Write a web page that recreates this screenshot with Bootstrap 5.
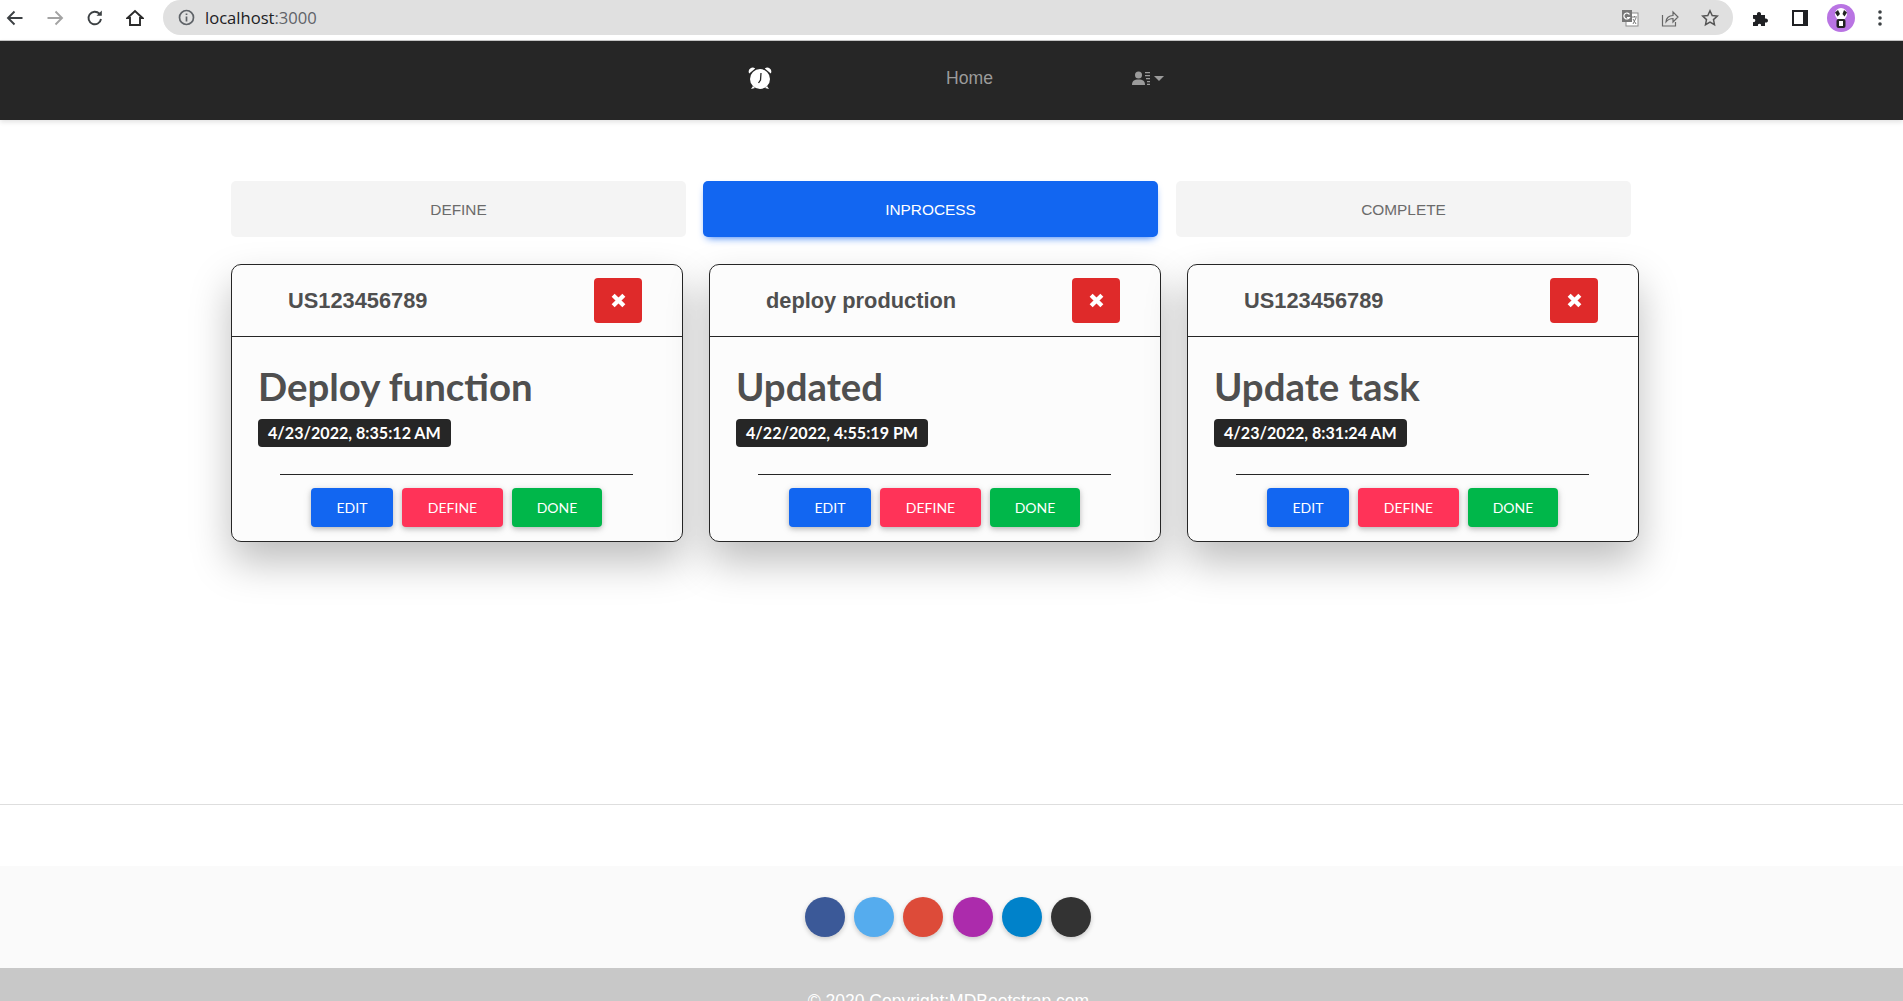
<!DOCTYPE html>
<html lang="en">
<head>
  <meta charset="UTF-8">
  <meta name="viewport" content="width=device-width, initial-scale=1.0">
  <title>Task board</title>
  <link href="https://cdn.jsdelivr.net/npm/bootstrap@5.3.3/dist/css/bootstrap.min.css" rel="stylesheet">
  <style>
    body { font-family: "Liberation Sans", sans-serif; background: #fff; }
    .page-clip { height: 1001px; }

    /* browser toolbar */
    .tool-bar { height: 41px; border-bottom: 1px solid #c8c8c8; padding: 0 0 5px 6px; }
    .tool-icon { width: 18px; height: 18px; flex: none; }
    .tool-back, .tool-forward, .tool-reload { margin-right: 22px; }
    .url-pill { width: 1570px; height: 35px; margin-left: 19px; background: #e0e0e0; border-radius: 18px; padding: 0 14px 0 15px; font: 16.6px "Open Sans", sans-serif; color: #202124; }
    .url-pill span { color: #5f6368; }
    .url-info { margin-right: 10px; }
    .pill-end { margin-left: auto; gap: 22px; }
    .ext-group { margin-left: 19px; }
    .ext-puzzle { margin-right: 21px; }
    .ext-panel { margin-right: 18px; }
    .avatar-dot { width: 28px; height: 28px; border-radius: 50%; background: #b974e3; flex: none; margin-right: 16px; }

    /* top nav */
    .top-nav { height: 79px; background: #262626; padding: 0; box-shadow: 0 2px 5px rgba(0,0,0,.12); }
    .top-nav .nav-link { color: #9b9b9b; font-size: 17.6px; padding: 0; margin-top: -4px; }
    .nav-clock { margin-left: 748px; margin-right: 174px; margin-top: -6px; }
    .top-nav .nav-user { margin-left: 139px; margin-top: -5px; display: flex; align-items: center; }

    /* status tabs */
    .board-wrap { padding: 61px 0 0 231px; }
    .tab-row { gap: 17px; }
    .tab-item { width: 455px; height: 56px; background: #f4f4f4; color: #6b6b6b; border: 0; border-radius: 5px; font-size: 15.400px; padding: 2px 0 0; }
    .tab-item.tab-on { background: #1266f1; color: #fff; box-shadow: 0 4px 9px -4px #1266f1; margin-right: 1px; }

    /* task cards */
    .card-row { gap: 26px; margin-top: 27px; }
    .task-card { width: 452px; height: 278px; background: #fcfcfc; border: 1px solid #262626; border-radius: 10px; box-shadow: 0 20px 40px rgba(0,0,0,.26); }
    .task-head { height: 72px; background: transparent; border-bottom: 1px solid #262626; padding: 0 40px 0 56px; color: #4f4f4f; font-size: 21.800px; font-weight: 700; }
    .task-head span { padding-top: 2px; }
    .close-btn { width: 48px; height: 45px; background: #df2a2a; color: #fff; border: 0; border-radius: 4px; padding: 0 0 2px; }
    .task-body { padding: 26px 27px 0 26px; }
    .task-title { font: 700 38.400px/1.2 Lato, sans-serif; color: #4f4f4f; margin: 0 0 10px; }
    .time-tag { background: #262626; color: #fff; font: 700 16.100px/20px Lato, sans-serif; padding: 4px 10px; border-radius: 4px; }
    .task-rule { width: 353px; margin: 27px 0 13px 22px; border: 0; border-top: 1px solid #262626; opacity: 1; }
    .task-actions { gap: 9px; }
    .act-btn { height: 39px; border: 0; border-radius: 4px; color: #fff; font: 400 14px Lato, sans-serif; padding: 0; box-shadow: 0 2px 5px rgba(0,0,0,.2), 0 2px 10px rgba(0,0,0,.1); }
    .act-edit { width: 82px; background: #1266f1; }
    .act-define { width: 101px; background: #ff3358; }
    .act-done { width: 90px; background: #00b74a; }
    .act-btn:hover { color: #fff; }

    /* footer */
    .rule-gap { margin-top: 262px; height: 62px; border-top: 1px solid #dedede; }
    .social-strip { height: 102px; background: #fafafa; gap: 9.300px; padding: 0 7px 1px 0; }
    .social-dot { width: 40px; height: 40px; border-radius: 50%; box-shadow: 0 2px 5px rgba(0,0,0,.2); }
    .copy-strip { background: #c8c8c8; color: #fff; font-size: 17.500px; text-align: center; padding: 20px 6px 0 0; height: 60px; }
  </style>
</head>
<body>
<div class="page-clip overflow-hidden">

  <div class="tool-bar d-flex align-items-center">
    <svg class="tool-icon tool-back" viewBox="0 0 18 18" fill="none" stroke="#3c4043" stroke-width="1.9"><path d="M16.5 9H2M8.5 2.5 2 9l6.5 6.5"/></svg>
    <svg class="tool-icon tool-forward" viewBox="0 0 18 18" fill="none" stroke="#a3a3a3" stroke-width="1.9"><path d="M1.5 9H16M9.5 2.5 16 9l-6.500 6.500"/></svg>
    <svg class="tool-icon tool-reload" viewBox="0 0 18 18" fill="none" stroke="#3c4043" stroke-width="1.9"><path d="M15 10a6.300 6.300 0 1 1-1.600-5.300"/><path d="M15.800 1.500v5.300h-5.300" fill="#3c4043" stroke="none"/></svg>
    <svg class="tool-icon" viewBox="0 0 18 18" fill="none" stroke="#2b2b2b" stroke-width="1.900"><path d="M1.500 9 9 2l7.500 7H14v7H4V9z"/></svg>
    <div class="url-pill d-flex align-items-center">
      <svg class="url-info" width="17" height="17" viewBox="0 0 17 17" fill="none" stroke="#5f6368" stroke-width="1.700"><circle cx="8.500" cy="8.500" r="7"/><path d="M8.500 7.500v5M8.500 4.500v1.500"/></svg>
      <div>localhost<span>:3000</span></div>
      <div class="pill-end d-flex align-items-center">
        <svg class="tool-icon" viewBox="0 0 18 18"><rect x="5" y="4" width="12" height="13" fill="#fff" stroke="#8b8b8b"/><rect x="1" y="1" width="10" height="12" fill="#777"/><path d="M8.500 5.500A3 3 0 1 0 8.500 8.500H6" fill="none" stroke="#fff" stroke-width="1.200"/><path d="M11 8h5M13.500 7v1M12 15l3-6M12 10l3 5" stroke="#777" fill="none"/></svg>
        <svg class="tool-icon" viewBox="0 0 18 18" fill="none" stroke="#666" stroke-width="1.200"><path d="M1.500 6v11h13v-4"/><path d="M5 13c0-4 3-6.500 7-6.500V3l5 5-5 5V9.500c-3 0-5 1-7 3.500z"/></svg>
        <svg class="tool-icon" viewBox="0 0 18 18" fill="none" stroke="#555" stroke-width="1.500"><path d="m9 1.800 2.200 4.700 5.100.6-3.800 3.500 1 5.100L9 13.200l-4.500 2.500 1-5.100-3.800-3.500 5.100-.6z"/></svg>
      </div>
    </div>
    <div class="ext-group d-flex align-items-center">
      <svg class="tool-icon ext-puzzle" viewBox="0 0 18 18" fill="#202124"><path d="M1 6h4c-1-4 5-4 4 0h4v3.500c4-1 4 5 0 4V17H9c1-3-4-3-3 0H1v-4c3 1 3-4 0-3z"/></svg>
      <svg class="tool-icon ext-panel" viewBox="0 0 18 18"><rect x="1" y="1" width="16" height="16" fill="#202124"/><rect x="3" y="3" width="9" height="12" fill="#fff"/></svg>
      <div class="avatar-dot d-flex align-items-center justify-content-center">
        <svg width="16" height="20" viewBox="0 0 16 20"><circle cx="8" cy="6" r="6" fill="#fff"/><path d="M2 4.500 5 2 7 6 4.500 8.500zM14 4.500 11 2 9.500 6l2 2.500z" fill="#222"/><rect x="3.500" y="11" width="9" height="9" rx="2" fill="#222"/><rect x="6" y="13" width="4" height="5" fill="#fff"/></svg>
      </div>
      <svg class="tool-icon" viewBox="0 0 18 18" fill="#3c4043"><circle cx="9" cy="3" r="1.800"/><circle cx="9" cy="9" r="1.800"/><circle cx="9" cy="15" r="1.800"/></svg>
    </div>
  </div>

  <nav class="navbar top-nav d-flex flex-nowrap justify-content-start align-items-center">
    <svg class="nav-clock" width="24" height="24" viewBox="0 0 24 24"><circle cx="12" cy="13" r="10" fill="#fff"/><path d="M1.200 7.500a4 4 0 0 1 6-5zM22.800 7.500a4 4 0 0 0-6-5z" fill="#fff"/><path d="M3 23l2-3 2 2zM21 23l-2-3-2 2z" fill="#fff"/><path d="M13 7l-.5 7-2 3" fill="none" stroke="#262626" stroke-width="1.300"/></svg>
    <a class="nav-link" href="#">Home</a>
    <a class="nav-link dropdown-toggle nav-user" href="#">
      <svg width="18" height="14" viewBox="0 0 18 14" fill="#9b9b9b"><circle cx="6.500" cy="4" r="3.500"/><path d="M0 14c0-4 2-5.500 6.500-5.500S13 10 13 14z"/><path d="M13 1h5v1.200h-5zM13 4h5v1.200h-5zM14 7h4v1.200h-4zM15 10h3v1.200h-3zM15 12.800h3V14h-3z"/></svg>
    </a>
  </nav>

  <main class="board-wrap">
    <div class="tab-row d-flex">
      <button class="tab-item" type="button">DEFINE</button>
      <button class="tab-item tab-on" type="button">INPROCESS</button>
      <button class="tab-item" type="button">COMPLETE</button>
    </div>

    <div class="card-row d-flex">
      <div class="card task-card">
        <div class="card-header task-head d-flex align-items-center justify-content-between">
          <span>US123456789</span>
          <button class="close-btn" type="button"><svg width="15" height="15" viewBox="0 0 14 14" stroke="#fff" stroke-width="4"><path d="M2 2l10 10M12 2 2 12"/></svg></button>
        </div>
        <div class="card-body task-body">
          <h2 class="task-title">Deploy function</h2>
          <span class="badge time-tag">4/23/2022, 8:35:12 AM</span>
          <hr class="task-rule">
          <div class="task-actions d-flex justify-content-center">
            <button class="btn act-btn act-edit" type="button">EDIT</button>
            <button class="btn act-btn act-define" type="button">DEFINE</button>
            <button class="btn act-btn act-done" type="button">DONE</button>
          </div>
        </div>
      </div>

      <div class="card task-card">
        <div class="card-header task-head d-flex align-items-center justify-content-between">
          <span>deploy production</span>
          <button class="close-btn" type="button"><svg width="15" height="15" viewBox="0 0 14 14" stroke="#fff" stroke-width="4"><path d="M2 2l10 10M12 2 2 12"/></svg></button>
        </div>
        <div class="card-body task-body">
          <h2 class="task-title">Updated</h2>
          <span class="badge time-tag">4/22/2022, 4:55:19 PM</span>
          <hr class="task-rule">
          <div class="task-actions d-flex justify-content-center">
            <button class="btn act-btn act-edit" type="button">EDIT</button>
            <button class="btn act-btn act-define" type="button">DEFINE</button>
            <button class="btn act-btn act-done" type="button">DONE</button>
          </div>
        </div>
      </div>

      <div class="card task-card">
        <div class="card-header task-head d-flex align-items-center justify-content-between">
          <span>US123456789</span>
          <button class="close-btn" type="button"><svg width="15" height="15" viewBox="0 0 14 14" stroke="#fff" stroke-width="4"><path d="M2 2l10 10M12 2 2 12"/></svg></button>
        </div>
        <div class="card-body task-body">
          <h2 class="task-title">Update task</h2>
          <span class="badge time-tag">4/23/2022, 8:31:24 AM</span>
          <hr class="task-rule">
          <div class="task-actions d-flex justify-content-center">
            <button class="btn act-btn act-edit" type="button">EDIT</button>
            <button class="btn act-btn act-define" type="button">DEFINE</button>
            <button class="btn act-btn act-done" type="button">DONE</button>
          </div>
        </div>
      </div>
    </div>
  </main>

  <footer>
    <div class="rule-gap"></div>
    <div class="social-strip d-flex justify-content-center align-items-center">
      <div class="social-dot" style="background:#3b5998"></div>
      <div class="social-dot" style="background:#55acee"></div>
      <div class="social-dot" style="background:#dd4b39"></div>
      <div class="social-dot" style="background:#ac2bac"></div>
      <div class="social-dot" style="background:#0082ca"></div>
      <div class="social-dot" style="background:#333"></div>
    </div>
    <div class="copy-strip">© 2020 Copyright:MDBootstrap.com</div>
  </footer>

</div>
<script src="https://cdn.jsdelivr.net/npm/bootstrap@5.3.3/dist/js/bootstrap.bundle.min.js"></script>
</body>
</html>
